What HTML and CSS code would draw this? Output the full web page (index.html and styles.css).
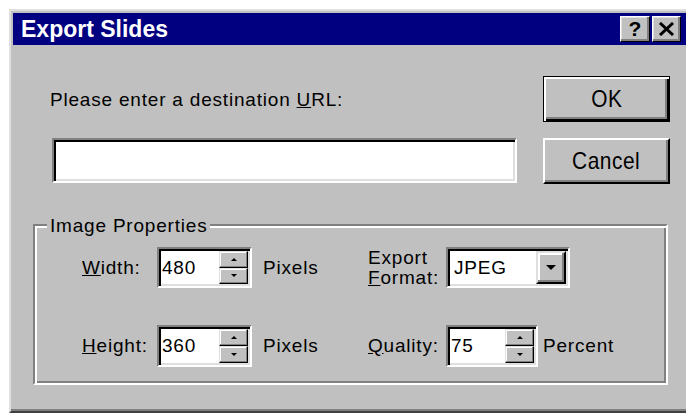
FILE: index.html
```html
<!DOCTYPE html>
<html lang="en">
<head>
<meta charset="utf-8">
<title>Export Slides</title>
<link rel="stylesheet" href="styles.css">
</head>
<body>
<div class="strip"><p class="strip-text">Slides.</p></div>
<div class="dialog">
  <div class="titlebar">
    <span class="title">Export Slides</span>
    <div class="caption-btns">
      <button class="cap-btn help">?</button>
      <button class="cap-btn close">
        <svg width="17" height="14" viewBox="0 0 17 14"><path d="M2 1 L15 13 M15 1 L2 13" stroke="#000" stroke-width="3" fill="none"/></svg>
      </button>
    </div>
  </div>
  <div class="content">
    <div class="top">
      <label class="url-label">Please enter a destination <u>U</u>RL:</label>
      <button class="btn btn-default"><span>OK</span></button>
      <div class="sunken url-field"></div>
      <button class="btn"><span>Cancel</span></button>
    </div>
    <div class="group">
      <span class="legend">Image Properties</span>
      <div class="props">
        <span class="lbl"><u>W</u>idth:</span>
        <div class="sunken spin">
          <span class="val">480</span>
          <div class="spin-btns">
            <span class="spin-btn"><i class="arrow-up"></i></span>
            <span class="spin-btn"><i class="arrow-down"></i></span>
          </div>
        </div>
        <span class="unit">Pixels</span>
        <span class="lbl two">Export<br><u>F</u>ormat:</span>
        <div class="sunken combo">
          <span class="val">JPEG</span>
          <span class="drop-btn"><i class="arrow-drop"></i></span>
        </div>

        <span class="lbl"><u>H</u>eight:</span>
        <div class="sunken spin">
          <span class="val">360</span>
          <div class="spin-btns">
            <span class="spin-btn"><i class="arrow-up"></i></span>
            <span class="spin-btn"><i class="arrow-down"></i></span>
          </div>
        </div>
        <span class="unit">Pixels</span>
        <span class="lbl"><u>Q</u>uality:</span>
        <div class="with-unit">
          <div class="sunken spin spin-narrow">
            <span class="val">75</span>
            <div class="spin-btns">
              <span class="spin-btn"><i class="arrow-up"></i></span>
              <span class="spin-btn"><i class="arrow-down"></i></span>
            </div>
          </div>
          <span class="unit-tight">Percent</span>
        </div>
      </div>
    </div>
  </div>
</div>
</body>
</html>
```
FILE: styles.css
```css
* { box-sizing: border-box; }

html, body {
  margin: 0;
  padding: 0;
  width: 686px;
  height: 415px;
  overflow: hidden;
  background: #fff;
}

body {
  font-family: "Liberation Sans", Arial, sans-serif;
  font-size: 19px;
  letter-spacing: 0.8px;
  color: #000;
}

/* bottom of the page text above the dialog */
.strip {
  height: 9px;
  overflow: hidden;
}
.strip-text {
  margin: -21px 0 0 9px;
  font: 26px/26px "Liberation Serif", serif;
  letter-spacing: 0;
}

/* window frame */
.dialog {
  width: 690px;
  margin-left: 9px;
  background: #c0c0c0;
  border: 2px solid;
  border-color: #dfdfdf #404040 #404040 #dfdfdf;
  box-shadow: inset -2px -2px #808080;
  padding: 2px;
}

.titlebar {
  height: 32px;
  background: #000080;
  display: flex;
  align-items: center;
  padding: 0 14px 0 8px;
}
.title {
  flex: 1;
  color: #fff;
  font-weight: bold;
  font-size: 23px;
  letter-spacing: 0;
}
.caption-btns {
  display: flex;
  gap: 2px;
}
.cap-btn {
  width: 30px;
  height: 26px;
  padding: 0;
  margin: 0;
  background: #c0c0c0;
  border: 1px solid;
  border-color: #fff #000 #000 #fff;
  box-shadow: inset -2px -2px #808080, inset 1px 1px #dfdfdf;
  display: flex;
  align-items: center;
  justify-content: center;
  font-family: "Liberation Sans", Arial, sans-serif;
  font-weight: bold;
  font-size: 21px;
  color: #000;
}
.cap-btn.close { width: 29px; }

.content {
  padding: 31px 0 24px 20px;
}

.top {
  display: grid;
  grid-template-columns: 465px 127px;
  grid-template-rows: 46px 46px;
  column-gap: 26px;
  row-gap: 16px;
  margin-left: 19px;
}
.url-label {
  align-self: start;
  margin: 12px 0 0 -2px;
  line-height: 24px;
}

.btn {
  margin: 0;
  padding: 0;
  width: 127px;
  height: 46px;
  background: #c0c0c0;
  border: 2px solid;
  border-color: #fff #000 #000 #fff;
  box-shadow: inset -2px -2px #808080;
  font-family: "Liberation Sans", Arial, sans-serif;
  color: #000;
}
.btn span {
  display: inline-block;
  font-size: 24px;
  letter-spacing: 0.6px;
  transform: scaleX(0.87);
}
.btn-default {
  border: 1px solid #000;
  box-shadow: inset 2px 2px #fff, inset -2px -2px #000, inset -4px -4px #808080;
}

.sunken {
  background: #fff;
  border: 2px solid;
  border-color: #808080 #fff #fff #808080;
  box-shadow: inset 2px 2px #000, inset -2px -2px #dfdfdf;
  padding: 2px;
}
.url-field {
  height: 45px;
}

/* etched group box */
.group {
  margin-top: 40px;
  width: 635px;
  border: 2px solid;
  border-color: #808080 #fff #fff #808080;
  box-shadow: inset 2px 2px #fff, inset -2px -2px #808080;
  padding-bottom: 16px;
}
.legend {
  display: block;
  width: max-content;
  margin: -11px 0 0 12px;
  padding: 0 3px;
  background: #c0c0c0;
  line-height: 22px;
}

.props {
  display: grid;
  grid-template-columns: 75px 95px 116px 78px auto;
  grid-template-rows: 41px 42px;
  row-gap: 37px;
  align-items: center;
  margin: 10px 0 0 47px;
}
.lbl { white-space: nowrap; }
.lbl.two { line-height: 20px; }
.unit { margin-left: 11px; }

.spin {
  width: 95px;
  height: 100%;
  display: flex;
}
.spin-narrow { width: 92px; }
.val {
  flex: 1;
  display: flex;
  align-items: center;
  padding-left: 1px;
}
.spin-btns {
  width: 29px;
  display: flex;
  flex-direction: column;
}
.spin-btn {
  flex: 1;
  background: #c0c0c0;
  border: 1px solid;
  border-color: #dfdfdf #000 #000 #dfdfdf;
  box-shadow: inset -1px -1px #808080, inset 1px 1px #fff;
  display: flex;
  align-items: center;
  justify-content: center;
}
.arrow-up {
  width: 0;
  height: 0;
  border-left: 3px solid transparent;
  border-right: 3px solid transparent;
  border-bottom: 3px solid #000;
}
.arrow-down {
  width: 0;
  height: 0;
  border-left: 3px solid transparent;
  border-right: 3px solid transparent;
  border-top: 3px solid #000;
}

.combo {
  width: 124px;
  height: 41px;
  display: flex;
}
.combo .val { padding-left: 4px; }
.drop-btn {
  width: 30px;
  background: #c0c0c0;
  border: 2px solid;
  border-color: #dfdfdf #000 #000 #dfdfdf;
  box-shadow: inset -2px -2px #808080, inset 2px 2px #fff;
  display: flex;
  align-items: center;
  justify-content: center;
}
.arrow-drop {
  width: 0;
  height: 0;
  border-left: 5px solid transparent;
  border-right: 5px solid transparent;
  border-top: 5px solid #000;
}

.with-unit {
  display: flex;
  align-items: center;
  gap: 5px;
  height: 100%;
}
.unit-tight { white-space: nowrap; }
```
